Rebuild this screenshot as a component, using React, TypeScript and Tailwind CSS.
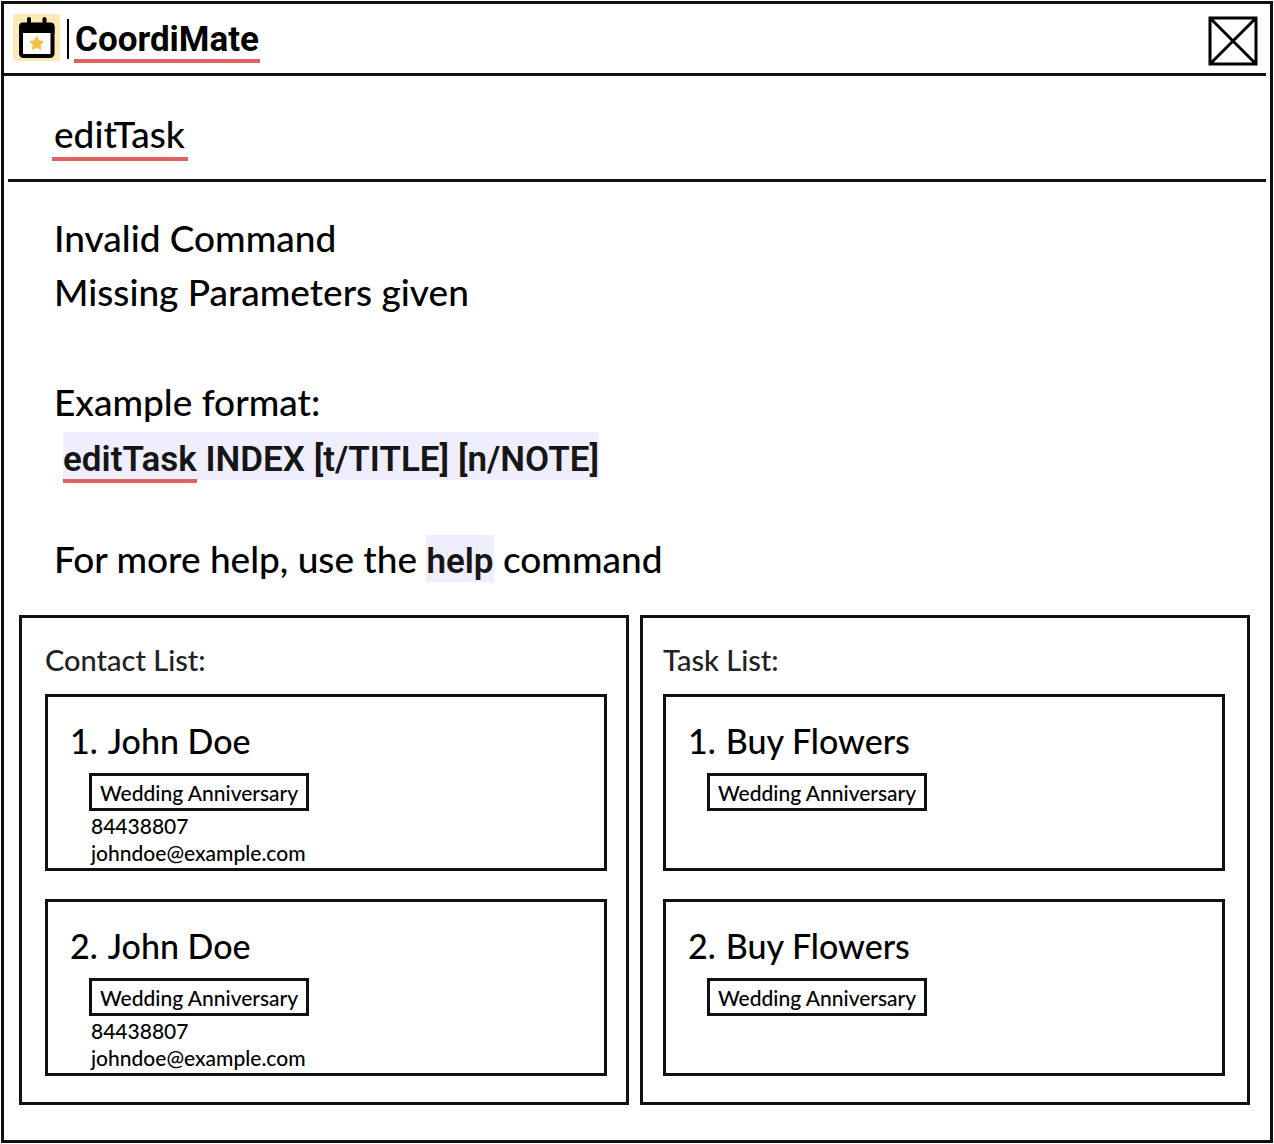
import React from "react";

type Entry = { name: string; tag: string; details: string[] };

const contacts: Entry[] = [
  { name: "John Doe", tag: "Wedding Anniversary", details: ["84438807", "johndoe@example.com"] },
  { name: "John Doe", tag: "Wedding Anniversary", details: ["84438807", "johndoe@example.com"] },
];

const tasks: Entry[] = [
  { name: "Buy Flowers", tag: "Wedding Anniversary", details: [] },
  { name: "Buy Flowers", tag: "Wedding Anniversary", details: [] },
];

function Logo() {
  return (
    <svg viewBox="0 0 48 48" className="mb-0.5 size-12 shrink-0" aria-hidden="true">
      <rect width="47" height="47" rx="2.500" fill="#fde8b6" />
      <rect x="8" y="11" width="31.500" height="31" rx="2.500" fill="#fdfdfd" stroke="#000" strokeWidth="4" />
      <path d="M6 12.500a4 4 0 0 1 4-4h27.500a4 4 0 0 1 4 4v6.500h-35.500z" fill="#000" />
      <path d="M16 5v5M31.500 5v5" stroke="#000" strokeWidth="4" strokeLinecap="round" />
      <path
        d="M23.700 22.500l2.100 4.300 4.700.7-3.400 3.300.8 4.700-4.200-2.200-4.200 2.200.8-4.700-3.400-3.300 4.700-.7z"
        fill="#f6c142"
        stroke="#f6c142"
        strokeWidth="1"
        strokeLinejoin="round"
      />
    </svg>
  );
}

function EntryCard({ entry, index }: { entry: Entry; index: number }) {
  return (
    <li className="h-[177px] border-3 border-[#111] pl-[22px] pt-[21px]">
      <h3 className="flex gap-2.5 text-[34px] leading-[45px]">
        <span>{index}.</span>
        <span>{entry.name}</span>
      </h3>
      <div className="ml-[19px] mt-[10px]">
        <span className="flex h-[38px] w-[220px] items-center border-3 border-[#111] pl-2 pt-0.5 text-[21px] leading-6">
          {entry.tag}
        </span>
        {entry.details.map((d) => (
          <p key={d} className="pl-0.5 pt-0.5 text-[21px] leading-[25px]">
            {d}
          </p>
        ))}
      </div>
    </li>
  );
}

function Panel({ title, entries, padding }: { title: string; entries: Entry[]; padding: string }) {
  return (
    <section className={`min-w-0 flex-1 border-3 border-[#111] pb-[26px] pt-[22px] ${padding}`}>
      <h2 className="text-[29px] leading-10 text-[#222]">{title}</h2>
      <ol className="mt-3.5 flex flex-col gap-7">
        {entries.map((e, i) => (
          <EntryCard key={i} entry={e} index={i + 1} />
        ))}
      </ol>
    </section>
  );
}

export default function App() {
  return (
    <div className="min-h-screen bg-white p-px font-[Lato,sans-serif] font-medium text-black">
      <main className="flex min-h-[1142px] flex-col border-3 border-[#111]">
        <header className="mr-1 flex h-[72px] items-center border-b-3 border-[#111] pl-[9px] pr-2">
          <Logo />
          <div className="ml-1.5 h-10 w-0.5 bg-black" />
          <h1 className="ml-[5px] border-b-4 border-[#e06361] px-px pt-1.5 font-[Roboto,sans-serif] text-[35px] font-bold leading-[38px]">
            CoordiMate
          </h1>
          <button type="button" aria-label="Close" className="ml-auto mt-1 size-[50px]">
            <svg viewBox="0 0 50 50" className="size-full" fill="none" stroke="#000" strokeWidth="3">
              <path d="M2 2h46v46H2zM2 2l46 46M48 2L2 48" />
            </svg>
          </button>
        </header>

        <div className="mx-1 h-[106px] border-b-3 border-[#111] pl-11 pt-[33px]">
          <input
            type="text"
            aria-label="Command"
            defaultValue="editTask"
            spellCheck={false}
            className="block h-[52px] w-[136px] border-b-4 border-[#e06361] pl-0.5 pt-0.5 text-[37px] outline-none"
          />
        </div>

        <div className="px-[50px] pt-[29px] text-[37px] leading-[54px]">
          <p>Invalid Command</p>
          <p>Missing Parameters given</p>
          <p className="mt-14">Example format:</p>
          <p className="ml-[9px] mt-[3px] flex">
            <code className="flex h-12 bg-[#efeefe] font-[Roboto,sans-serif] text-[35px] font-semibold leading-[56px] text-[#161616]">
              <span className="h-[51px] border-b-4 border-[#e06361]">editTask</span>
              <span className="whitespace-pre"> INDEX [t/TITLE] [n/NOTE]</span>
            </code>
          </p>
          <p className="mt-[52px]">
            For more help, use the{" "}
            <code className="bg-[#efeefe] pt-1.5 font-[Roboto,sans-serif] text-[35px] font-semibold text-[#161616]">help</code> command
          </p>
        </div>

        <div className="mb-[34px] ml-[15px] mr-5 mt-[26px] flex gap-[11px]">
          <Panel title="Contact List:" entries={contacts} padding="pl-[23px] pr-[19px]" />
          <Panel title="Task List:" entries={tasks} padding="pl-5 pr-[22px]" />
        </div>
      </main>
    </div>
  );
}
